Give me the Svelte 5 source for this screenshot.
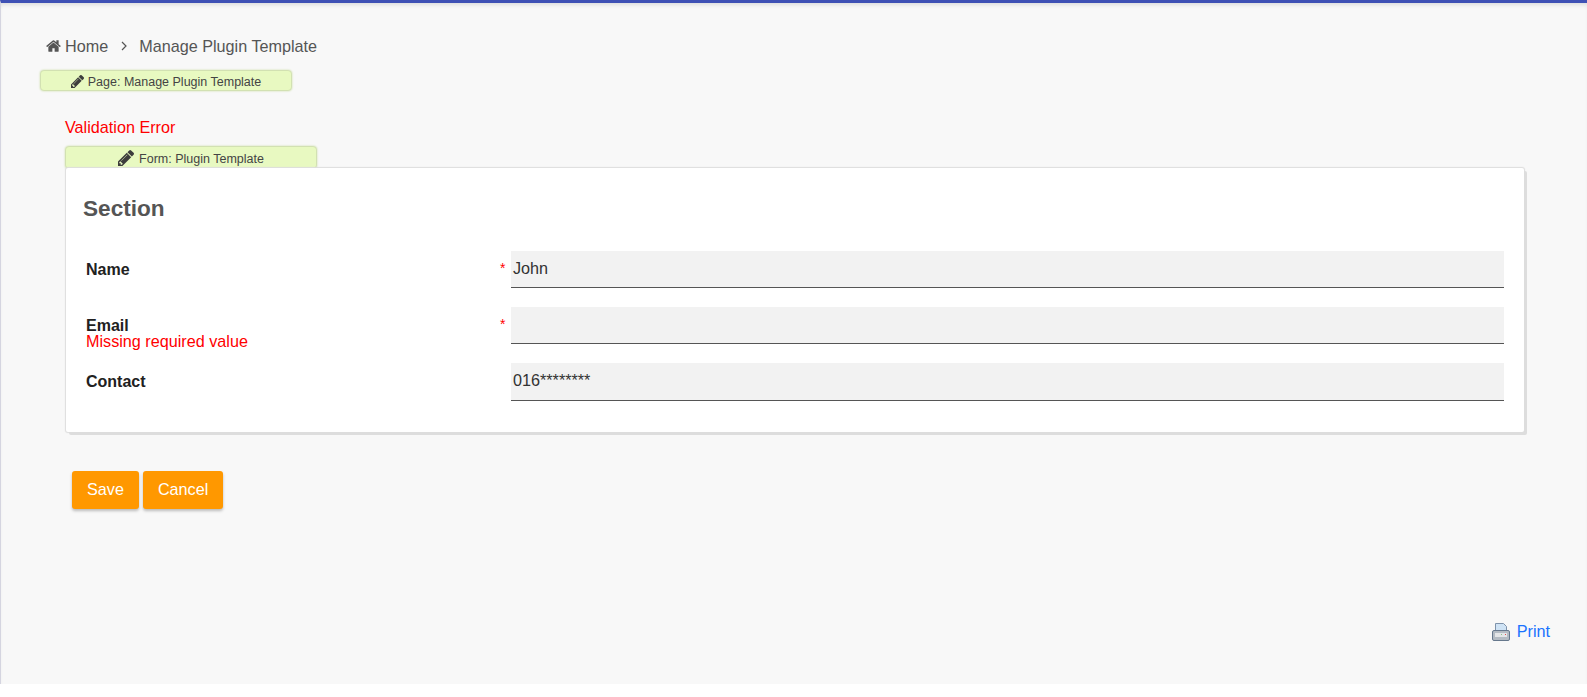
<script>
  const fields = [
    { label: "Name", value: "John", required: true },
    { label: "Email", value: "", required: true, error: "Missing required value" },
    { label: "Contact", value: "016********", required: false }
  ];
</script>

<div class="page">
  <main class="content">
    <nav class="crumbs">
      <svg class="home" viewBox="0 0 1664 1792" aria-hidden="true">
        <path d="M1408 992v480q0 26-19 45t-45 19h-384v-384h-256v384h-384q-26 0-45-19t-19-45v-480q0-1 .5-3t.5-3l575-474 575 474q1 2 1 6zm223-69l-62 74q-8 9-21 11h-3q-13 0-21-7l-692-577-692 577q-12 8-24 7-13-2-21-11l-62-74q-8-10-7-23.500t11-21.500l719-599q32-26 76-26t76 26l244 204v-195q0-14 9-23t23-9h192q14 0 23 9t9 23v408l219 182q10 8 11 21.500t-7 23.500z" />
      </svg>
      <span>Home</span>
      <svg class="chev" viewBox="0 0 10 10" aria-hidden="true"><path d="M3 1l4 4-4 4" /></svg>
      <span>Manage Plugin Template</span>
    </nav>

    <div class="tag page-tag">
      <svg class="pencil" viewBox="0 0 1515 1515" aria-hidden="true">
        <path d="M363 1387l91-91-235-235-91 91v107h128v128h107zm523-928q0-22-22-22-10 0-17 7l-542 542q-7 7-7 17 0 22 22 22 10 0 17-7l542-542q7-7 7-17zm-54-192l416 416-832 832h-416v-416zm683 96q0 53-37 90l-166 166-416-416 166-165q36-38 90-38 53 0 91 38l235 234q37 39 37 91z" />
      </svg>
      <span>Page: Manage Plugin Template</span>
    </div>

    <p class="validation">Validation Error</p>

    <div class="tag form-tag">
      <svg class="pencil big" viewBox="0 0 1515 1515" aria-hidden="true">
        <path d="M363 1387l91-91-235-235-91 91v107h128v128h107zm523-928q0-22-22-22-10 0-17 7l-542 542q-7 7-7 17 0 22 22 22 10 0 17-7l542-542q7-7 7-17zm-54-192l416 416-832 832h-416v-416zm683 96q0 53-37 90l-166 166-416-416 166-165q36-38 90-38 53 0 91 38l235 234q37 39 37 91z" />
      </svg>
      <span>Form: Plugin Template</span>
    </div>

    <section class="card">
      <h2>Section</h2>
      <div class="rows">
        {#each fields as field}
          <div class="row">
            <div class="label">
              <strong>{field.label}</strong>
              {#if field.error}<span class="error">{field.error}</span>{/if}
            </div>
            <span class="req">{field.required ? "*" : ""}</span>
            <div class="input">{field.value}</div>
          </div>
        {/each}
      </div>
    </section>

    <div class="actions">
      <button type="button">Save</button>
      <button type="button">Cancel</button>
    </div>

    <div class="print">
      <svg viewBox="0 0 18 18" width="18" height="18" aria-hidden="true">
        <path d="M3.500 .5h8l3 3v6h-11z" fill="#cfe3f5" stroke="#7f93ab" />
        <rect x="0.500" y="7.500" width="17" height="10" rx="1.500" fill="#b4bbc3" stroke="#66788d" />
        <rect x="3" y="10" width="12" height="4" fill="#e4e6e8" />
        <rect x="9" y="11" width="1" height="1" fill="#8cc28c" />
        <rect x="13" y="11" width="1" height="1" fill="#e05050" />
      </svg>
      <a href="#print">Print</a>
    </div>
  </main>
</div>

<style>
  :global(body) {
    margin: 0;
    background: #fff;
    color: #212121;
    font-family: "Liberation Sans", Arial, sans-serif;
    font-size: 16px;
  }

  .page {
    height: 684px;
    box-sizing: border-box;
    border-top: 3px solid #3f51b5;
    border-left: 1px solid #d5d5e0;
    background: #f8f8f8;
    box-shadow: inset 0 4px 4px -2px #ddd;
  }

  .content {
    padding: 33px 63px 0 40px;
    position: relative;
    height: 100%;
    box-sizing: border-box;
  }

  .crumbs {
    display: flex;
    align-items: center;
    height: 20px;
    padding-left: 5px;
    color: #555;
    font-size: 16.200px;
  }

  .home {
    width: 15px;
    height: 16px;
    fill: #555;
    margin-right: 4px;
  }

  .chev {
    width: 10px;
    height: 10px;
    fill: none;
    stroke: #555;
    stroke-width: 1.200;
    margin: 0 10px 0 11px;
  }

  .tag {
    display: flex;
    align-items: center;
    justify-content: center;
    box-sizing: border-box;
    width: 250px;
    height: 19px;
    border-radius: 3px;
    background: #e8f9c1;
    box-shadow: 0 0 2px 1px #c5d99a;
    font-size: 12.500px;
    color: #444;
  }

  .page-tag {
    margin-top: 15px;
    padding-top: 2px;
  }

  .form-tag {
    height: 21px;
    margin: 11px 0 0 25px;
    padding-top: 3px;
  }

  .pencil {
    width: 13px;
    height: 13px;
    fill: #3d3d3d;
    margin-right: 4px;
  }

  .pencil.big {
    width: 16px;
    height: 16px;
    margin: -3px 5px 0 0;
  }

  .validation {
    margin: 28px 0 0 24px;
    height: 18px;
    line-height: 18px;
    color: #f00;
    font-size: 16.200px;
  }

  .card {
    margin-left: 25px;
    height: 264px;
    box-sizing: border-box;
    padding: 28px 20px 0 17px;
    background: #fff;
    border-radius: 2px;
    box-shadow: 0 0 1px 1px #ddd, 3px 3px 0 0 #ddd;
  }

  h2 {
    margin: 0;
    height: 25px;
    line-height: 25px;
    font-size: 22.600px;
    font-weight: 700;
    color: #555;
  }

  .rows {
    display: flex;
    flex-direction: column;
    gap: 19px;
    margin-top: 30px;
  }

  .row {
    display: flex;
    height: 37px;
  }

  .row:last-child {
    height: 38px;
  }

  .label {
    width: 404px;
    padding: 11px 0 0 3px;
    display: flex;
    flex-direction: column;
    line-height: 16px;
  }

  .label strong {
    font-size: 16px;
    color: #212121;
  }

  .error {
    margin-top: -1px;
    color: #f00;
    line-height: 16px;
    font-size: 16.200px;
  }

  .req {
    padding: 9px 0 0 10px;
    width: 11px;
    color: #f00;
    font-size: 14px;
    line-height: 16px;
  }

  .input {
    flex: 1;
    box-sizing: border-box;
    padding: 7px 2px 0;
    line-height: 20px;
    background: #f2f2f2;
    border-bottom: 1px solid #555;
    color: #333;
    font-size: 16.200px;
  }

  .actions {
    display: flex;
    gap: 4px;
    margin: 39px 0 0 31px;
  }

  button {
    height: 38px;
    padding: 0 15px 1px;
    border: 0;
    border-radius: 3px;
    background: #ff9800;
    color: #fff;
    font: inherit;
    font-size: 16.200px;
    box-shadow: 0 2px 3px #bbb;
  }

  .print {
    position: absolute;
    right: 37px;
    top: 619px;
    display: flex;
    align-items: center;
    gap: 7px;
  }

  .print a {
    color: #1a73ff;
    text-decoration: none;
    font-size: 16.200px;
  }
</style>
